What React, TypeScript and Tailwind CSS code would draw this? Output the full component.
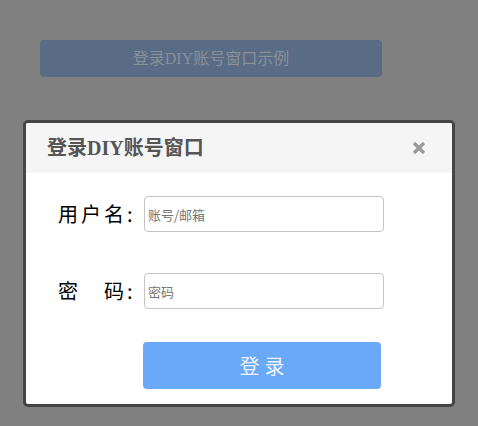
import React from "react";

export default function App() {
  return (
    <div className="w-[478px] h-[426px] bg-[#808080] flex flex-col pt-[40px] overflow-hidden">
      <button className="ml-[40px] w-[342px] h-[37px] rounded-[4px] bg-[#596b85] text-[#8a9099] text-[16px] leading-none flex items-center justify-center font-['Liberation_Serif','Noto_Sans_CJK_SC',serif]">
        登录DIY账号窗口示例
      </button>

      <div className="ml-[23px] mt-[43px] w-[432px] h-[287px] border-[3px] border-[#454545] rounded-[5px] bg-white overflow-hidden flex flex-col">
        <div className="h-[50px] shrink-0 bg-[#f5f5f5] flex items-center justify-between pl-[21px] pr-[26px]">
          <span className="text-[20px] font-semibold text-[#555] leading-none font-['Liberation_Serif','Noto_Sans_CJK_SC',serif]">
            登录DIY账号窗口
          </span>
          <svg width="14" height="14" viewBox="0 0 14 14">
            <path d="M2 2 L12 12 M12 2 L2 12" stroke="#9a9a9a" strokeWidth="3.2" strokeLinecap="butt" />
          </svg>
        </div>

        <div className="flex flex-col pt-[23px] pb-[15px]">
          <div className="flex items-center pl-[32px]">
            <label className="w-[86px] text-[20px] tracking-[3px] text-black leading-none font-['Noto_Sans_CJK_SC',sans-serif]">
              用户名:
            </label>
            <input
              className="w-[240px] h-[36px] border border-[#c4c4c4] rounded-[4px] px-[3px] text-[13px] text-[#333] placeholder:text-[#757575] outline-none font-['Noto_Sans_CJK_SC',sans-serif]"
              placeholder="账号/邮箱"
            />
          </div>

          <div className="flex items-center pl-[32px] mt-[41px]">
            <label className="w-[86px] text-[20px] tracking-[3px] text-black leading-none font-['Noto_Sans_CJK_SC',sans-serif]">
              密　码:
            </label>
            <input
              type="password"
              className="w-[240px] h-[36px] border border-[#c4c4c4] rounded-[4px] px-[3px] text-[13px] text-[#333] placeholder:text-[#757575] outline-none font-['Noto_Sans_CJK_SC',sans-serif]"
              placeholder="密码"
            />
          </div>

          <button className="ml-[117px] mt-[33px] w-[238px] h-[47px] rounded-[4px] bg-[#6aa8f8] text-[#eef3fb] text-[20px] tracking-[5px] leading-none flex items-center justify-center pl-[5px] font-['Noto_Sans_CJK_SC',sans-serif]">
            登录
          </button>
        </div>
      </div>
    </div>
  );
}
